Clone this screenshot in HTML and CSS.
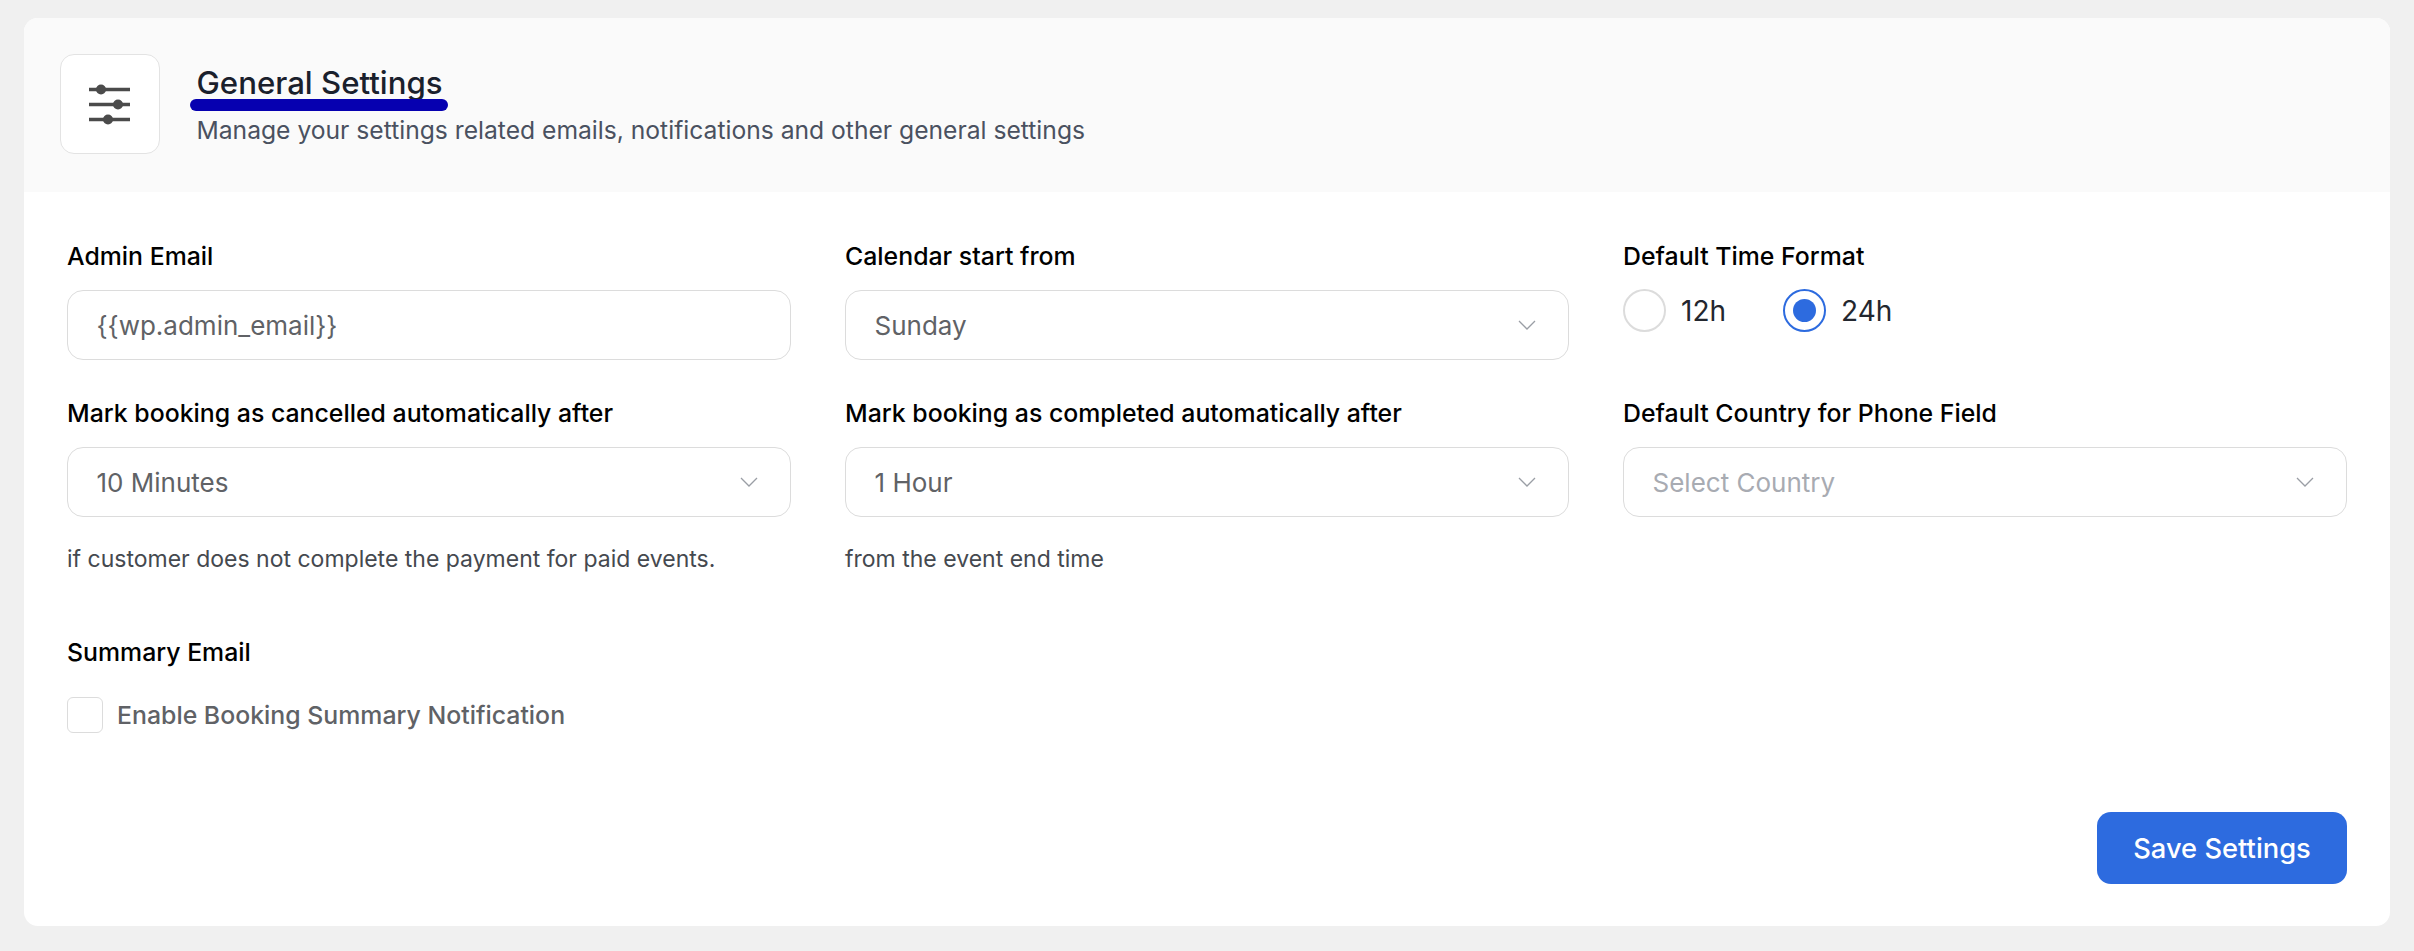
FILE: index.html
```html
<!DOCTYPE html>
<html lang="en">
<head>
<meta charset="utf-8">
<title>General Settings</title>
<link rel="stylesheet" href="styles.css">
</head>
<body>
<main class="card">
  <header class="card-header">
    <div class="icon-box">
      <svg class="sliders" width="42" height="42" viewBox="0 0 42 42" aria-hidden="true">
        <g stroke="#4b4b4b" stroke-width="3.4" fill="none">
          <path d="M0 6.5h41"/><path d="M0 21.5h41"/><path d="M0 36.5h41"/>
        </g>
        <g fill="#4b4b4b">
          <circle cx="12" cy="6.5" r="5"/><circle cx="29" cy="21.5" r="5"/><circle cx="19" cy="36.5" r="5"/>
        </g>
      </svg>
    </div>
    <div class="heading">
      <h1 class="title">General Settings<span class="underline"></span></h1>
      <p class="subtitle">Manage your settings related emails, notifications and other general settings</p>
    </div>
  </header>
  <section class="card-body">
    <div class="grid">
      <div class="field">
        <label class="label">Admin Email</label>
        <div class="control"><span class="value">{{wp.admin_email}}</span></div>
      </div>
      <div class="field">
        <label class="label">Calendar start from</label>
        <div class="control"><span class="value">Sunday</span>
          <svg class="chevron" width="18" height="10" viewBox="0 0 18 10"><path d="M1 1l8 8 8-8"/></svg></div>
      </div>
      <div class="field">
        <label class="label">Default Time Format</label>
        <div class="radios">
          <span class="radio-item"><span class="radio"></span><span class="radio-text">12h</span></span>
          <span class="radio-item"><span class="radio checked"></span><span class="radio-text">24h</span></span>
        </div>
      </div>
      <div class="field">
        <label class="label">Mark booking as cancelled automatically after</label>
        <div class="control"><span class="value">10 Minutes</span>
          <svg class="chevron" width="18" height="10" viewBox="0 0 18 10"><path d="M1 1l8 8 8-8"/></svg></div>
        <p class="help">if customer does not complete the payment for paid events.</p>
      </div>
      <div class="field">
        <label class="label">Mark booking as completed automatically after</label>
        <div class="control"><span class="value">1 Hour</span>
          <svg class="chevron" width="18" height="10" viewBox="0 0 18 10"><path d="M1 1l8 8 8-8"/></svg></div>
        <p class="help">from the event end time</p>
      </div>
      <div class="field">
        <label class="label">Default Country for Phone Field</label>
        <div class="control"><span class="value placeholder">Select Country</span>
          <svg class="chevron" width="18" height="10" viewBox="0 0 18 10"><path d="M1 1l8 8 8-8"/></svg></div>
      </div>
    </div>
    <div class="summary">
      <label class="label">Summary Email</label>
      <div class="check-row"><span class="checkbox"></span><span class="check-text">Enable Booking Summary Notification</span></div>
    </div>
    <div class="actions"><button class="save" type="button">Save Settings</button></div>
  </section>
</main>
</body>
</html>
```
FILE: styles.css
```css
* { box-sizing: border-box; }
html, body { margin: 0; }
body {
  background: #f0f0f0;
  padding: 18px 24px 25px;
  font-family: Inter, "Liberation Sans", sans-serif;
  height: 951px;
  overflow: hidden;
}
.card {
  background: #fff;
  border-radius: 14px;
  height: 908px;
  overflow: hidden;
}
.card-header {
  background: #fafafa;
  height: 174px;
  padding: 36px 36px 0;
  display: flex;
  gap: 36.5px;
}
.icon-box {
  width: 100px;
  height: 100px;
  background: #fff;
  border: 1px solid #e3e3e3;
  border-radius: 14px;
  display: flex;
  align-items: center;
  justify-content: center;
}
.heading { padding-top: 10px; }
.title {
  position: relative;
  margin: 0;
  font-size: 31.2px;
  line-height: 38px;
  font-weight: 500;
  color: #1a202c;
  width: fit-content;
}
.underline {
  position: absolute;
  left: -7px;
  right: -5px;
  top: 35px;
  height: 12px;
  border-radius: 6px;
  background: #0600b0;
}
.subtitle {
  margin: 12px 0 0;
  font-size: 24.65px;
  line-height: 32px;
  color: #4a5160;
}
.card-body { padding: 47px 43px 43px; }
.grid {
  display: grid;
  grid-template-columns: repeat(3, 724px);
  column-gap: 54px;
  row-gap: 36px;
}
.label {
  display: block;
  font-size: 24.85px;
  line-height: 34px;
  font-weight: 500;
  color: #000;
  margin-bottom: 17px;
}
.control {
  height: 70px;
  border: 1px solid #dcdcdc;
  border-radius: 16px;
  background: #fff;
  padding: 0 28.5px;
  display: flex;
  align-items: center;
  justify-content: space-between;
}
.value { font-size: 26px; color: #606266; }
.placeholder { color: #a8abb2; }
.chevron { margin-right: 4px; }
.chevron path { fill: none; stroke: #9a9ea5; stroke-width: 1.3; }
.radios {
  display: flex;
  gap: 57px;
  margin-top: -1px;
}
.radio-item { display: flex; align-items: center; gap: 15px; }
.radio {
  width: 43px;
  height: 43px;
  border: 2px solid #dcdcdc;
  border-radius: 50%;
  display: flex;
  align-items: center;
  justify-content: center;
}
.radio.checked { border-color: #2d6bdf; }
.radio.checked::after {
  content: "";
  width: 23px;
  height: 23px;
  border-radius: 50%;
  background: #2d6bdf;
}
.radio-text { font-size: 28px; color: #23272f; }
.help {
  margin: 26px 0 0;
  font-size: 23px;
  line-height: 32px;
  color: #45494f;
}
.summary { margin-top: 60px; }
.check-row { display: flex; align-items: center; gap: 14px; margin-top: 28px; }
.checkbox {
  width: 36px;
  height: 36px;
  border: 1px solid #dcdcdc;
  border-radius: 6px;
  background: #fff;
}
.check-text { font-size: 24.85px; font-weight: 500; color: #606266; }
.actions { display: flex; justify-content: flex-end; margin-top: 79px; }
.save {
  width: 250px;
  height: 72px;
  border: 0;
  border-radius: 14px;
  background: #2d6bdf;
  color: #fff;
  font: 500 27.3px Inter, "Liberation Sans", sans-serif;
  padding: 0;
}
```
